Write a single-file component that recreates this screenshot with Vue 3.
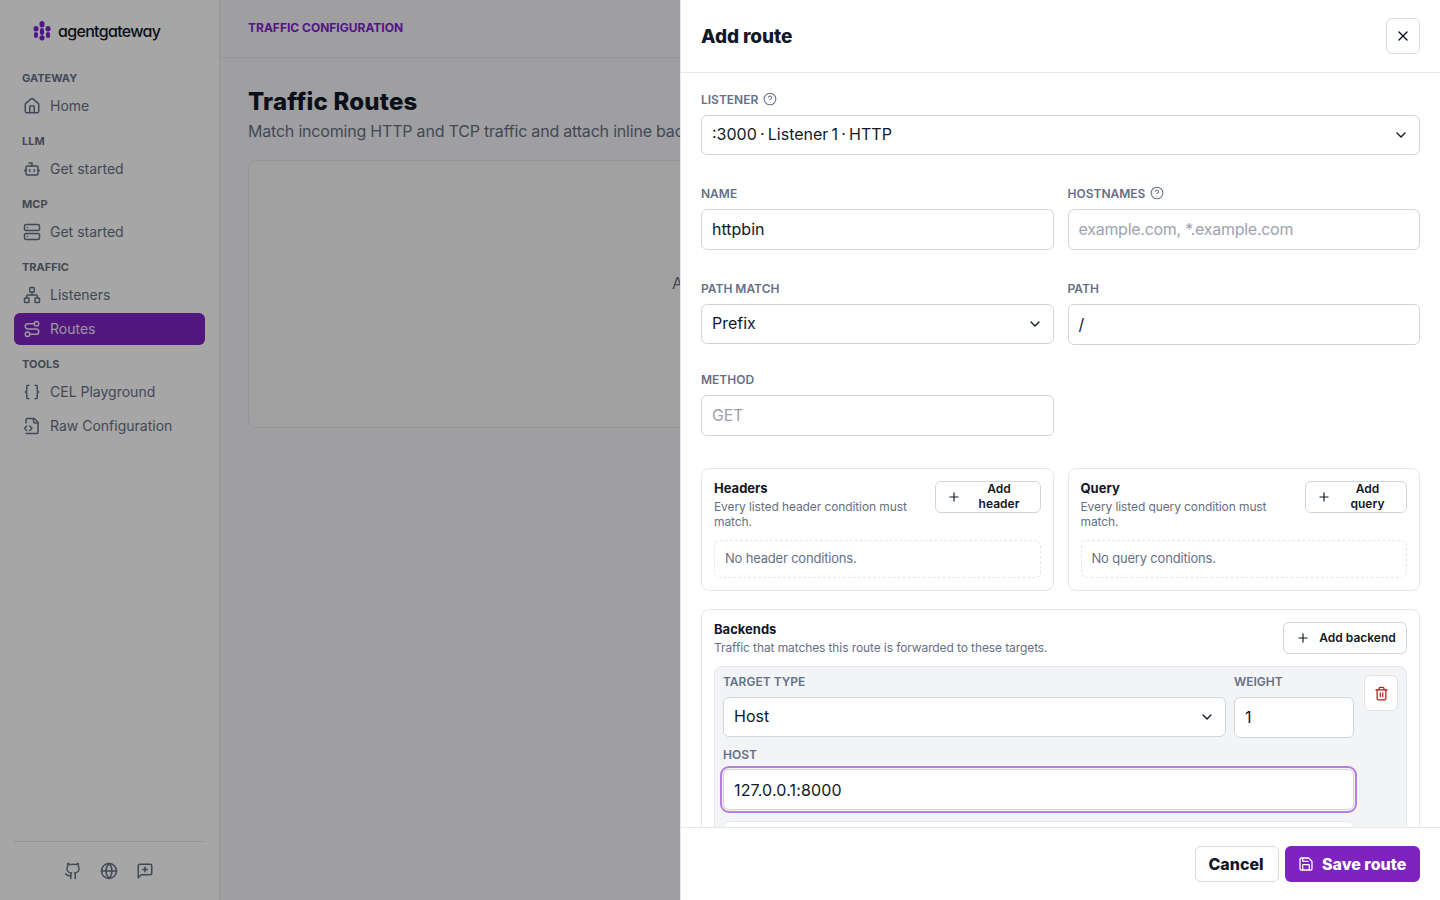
<script setup>
const icons = {
  home: '<path d="M15 21v-8a1 1 0 0 0-1-1h-4a1 1 0 0 0-1 1v8"/><path d="M3 10a2 2 0 0 1 .709-1.528l7-5.999a2 2 0 0 1 2.582 0l7 5.999A2 2 0 0 1 21 10v9a2 2 0 0 1-2 2H5a2 2 0 0 1-2-2z"/>',
  bot: '<path d="M12 8V4H8"/><rect width="16" height="12" x="4" y="8" rx="2"/><path d="M2 14h2"/><path d="M20 14h2"/><path d="M15 13v2"/><path d="M9 13v2"/>',
  server: '<rect width="20" height="8" x="2" y="2" rx="2"/><rect width="20" height="8" x="2" y="14" rx="2"/><path d="M6 6h.01"/><path d="M6 18h.01"/>',
  network: '<rect x="16" y="16" width="6" height="6" rx="1"/><rect x="2" y="16" width="6" height="6" rx="1"/><rect x="9" y="2" width="6" height="6" rx="1"/><path d="M5 16v-3a1 1 0 0 1 1-1h12a1 1 0 0 1 1 1v3"/><path d="M12 12V8"/>',
  route: '<circle cx="6" cy="19" r="3"/><path d="M9 19h8.5a3.5 3.5 0 0 0 0-7h-11a3.5 3.5 0 0 1 0-7H15"/><circle cx="18" cy="5" r="3"/>',
  braces: '<path d="M8 3H7a2 2 0 0 0-2 2v5a2 2 0 0 1-2 2 2 2 0 0 1 2 2v5c0 1.1.9 2 2 2h1"/><path d="M16 21h1a2 2 0 0 0 2-2v-5c0-1.1.9-2 2-2a2 2 0 0 1-2-2V5a2 2 0 0 0-2-2h-1"/>',
  file: '<path d="M4 22h14a2 2 0 0 0 2-2V7l-5-5H6a2 2 0 0 0-2 2v4"/><path d="M14 2v4a2 2 0 0 0 2 2h4"/><path d="m5 12-3 3 3 3"/><path d="m9 18 3-3-3-3"/>',
  github: '<path d="M15 22v-4a4.8 4.8 0 0 0-1-3.5c3 0 6-2 6-5.5.08-1.25-.27-2.48-1-3.5.28-1.15.28-2.35 0-3.5 0 0-1 0-3 1.5-2.64-.5-5.36-.5-8 0C6 2 5 2 5 2c-.3 1.15-.3 2.35 0 3.5A5.403 5.403 0 0 0 4 9c0 3.5 3 5.5 6 5.5-.39.49-.68 1.05-.85 1.65-.17.6-.22 1.23-.15 1.85v4"/><path d="M9 18c-4.51 2-5-2-7-2"/>',
  globe: '<circle cx="12" cy="12" r="10"/><path d="M12 2a14.5 14.5 0 0 0 0 20 14.5 14.5 0 0 0 0-20"/><path d="M2 12h20"/>',
  message: '<path d="M21 15a2 2 0 0 1-2 2H7l-4 4V5a2 2 0 0 1 2-2h14a2 2 0 0 1 2 2z"/><path d="M12 7v6"/><path d="M9 10h6"/>',
  x: '<path d="M18 6 6 18"/><path d="m6 6 12 12"/>',
  help: '<circle cx="12" cy="12" r="10"/><path d="M9.09 9a3 3 0 0 1 5.83 1c0 2-3 3-3 3"/><path d="M12 17h.01"/>',
  plus: '<path d="M5 12h14"/><path d="M12 5v14"/>',
  trash: '<path d="M3 6h18"/><path d="M19 6v14c0 1-1 2-2 2H7c-1 0-2-1-2-2V6"/><path d="M8 6V4c0-1 1-2 2-2h4c1 0 2 1 2 2v2"/><path d="M10 11v6"/><path d="M14 11v6"/>',
  save: '<path d="M15.2 3a2 2 0 0 1 1.4.6l3.8 3.8a2 2 0 0 1 .6 1.4V19a2 2 0 0 1-2 2H5a2 2 0 0 1-2-2V5a2 2 0 0 1 2-2z"/><path d="M17 21v-7a1 1 0 0 0-1-1H8a1 1 0 0 0-1 1v7"/><path d="M7 3v4a1 1 0 0 0 1 1h7"/>',
}

const nav = [
  { title: 'Gateway', items: [{ label: 'Home', icon: 'home' }] },
  { title: 'LLM', items: [{ label: 'Get started', icon: 'bot' }] },
  { title: 'MCP', items: [{ label: 'Get started', icon: 'server' }] },
  { title: 'Traffic', items: [{ label: 'Listeners', icon: 'network' }, { label: 'Routes', icon: 'route', active: true }] },
  { title: 'Tools', items: [{ label: 'CEL Playground', icon: 'braces' }, { label: 'Raw Configuration', icon: 'file' }] },
]
</script>

<template>
  <div class="page">
    <aside class="sidebar">
      <div class="logo">
        <svg class="logo-mark" width="18" height="20" viewBox="0 0 18 20" fill="#7e22ce">
          <rect x="0.5" y="5" width="5" height="5.5" rx="2.5" />
          <rect x="1" y="11" width="4" height="6" rx="2" />
          <rect x="6.5" y="0" width="5" height="6.5" rx="2.5" />
          <rect x="7" y="7" width="4" height="7" rx="2" />
          <circle cx="9" cy="16.8" r="2.6" />
          <rect x="12.5" y="5" width="5" height="5.5" rx="2.5" />
          <rect x="13" y="11" width="4" height="6" rx="2" />
        </svg>
        <span class="logo-text">agentgateway</span>
      </div>
      <nav class="nav">
        <section v-for="group in nav" :key="group.title" class="nav-group">
          <h4>{{ group.title }}</h4>
          <a v-for="item in group.items" :key="item.label" class="nav-item" :class="{ active: item.active }">
            <svg class="icon" width="18" height="18" viewBox="0 0 24 24" v-html="icons[item.icon]"></svg>
            <span>{{ item.label }}</span>
          </a>
        </section>
      </nav>
      <div class="side-foot">
        <svg class="icon" width="18" height="18" viewBox="0 0 24 24" v-html="icons.github"></svg>
        <svg class="icon" width="18" height="18" viewBox="0 0 24 24" v-html="icons.globe"></svg>
        <svg class="icon" width="18" height="18" viewBox="0 0 24 24" v-html="icons.message"></svg>
      </div>
    </aside>

    <main class="main">
      <header class="topbar">Traffic Configuration</header>
      <div class="content">
        <h1>Traffic Routes</h1>
        <p>Match incoming HTTP and TCP traffic and attach inline backends to each route.</p>
        <div class="blank">Add a listener before creating a route.</div>
      </div>
    </main>

    <div class="overlay"></div>

    <div class="drawer">
      <header class="drawer-head">
        <h2>Add route</h2>
        <button class="close"><svg class="icon" width="16" height="16" viewBox="0 0 24 24" v-html="icons.x"></svg></button>
      </header>

      <div class="drawer-body">
        <div class="field first">
          <label>Listener <svg class="icon" width="14" height="14" viewBox="0 0 24 24" v-html="icons.help"></svg></label>
          <div class="select-wrap">
            <select class="tight"><option>:3000 · Listener 1 · HTTP</option></select>
            <svg class="icon chev" width="16" height="16" viewBox="0 0 24 24"><path d="m6 9 6 6 6-6" /></svg>
          </div>
        </div>

        <div class="row r1">
          <div class="field">
            <label>Name</label>
            <input type="text" value="httpbin" />
          </div>
          <div class="field">
            <label>Hostnames <svg class="icon" width="14" height="14" viewBox="0 0 24 24" v-html="icons.help"></svg></label>
            <input type="text" placeholder="example.com, *.example.com" />
          </div>
        </div>

        <div class="row r2">
          <div class="field">
            <label>Path match</label>
            <div class="select-wrap">
              <select><option>Prefix</option></select>
              <svg class="icon chev" width="16" height="16" viewBox="0 0 24 24"><path d="m6 9 6 6 6-6" /></svg>
            </div>
          </div>
          <div class="field">
            <label>Path</label>
            <input type="text" value="/" />
          </div>
        </div>

        <div class="row r3">
          <div class="field">
            <label>Method</label>
            <input type="text" placeholder="GET" />
          </div>
        </div>

        <div class="row cards">
          <section class="card">
            <div class="card-head">
              <div class="card-text">
                <h3>Headers</h3>
                <p>Every listed header condition must match.</p>
              </div>
              <button class="btn-add w-header">
                <svg class="icon" width="14" height="14" viewBox="0 0 24 24" v-html="icons.plus"></svg>
                <span>Add header</span>
              </button>
            </div>
            <div class="empty">No header conditions.</div>
          </section>
          <section class="card">
            <div class="card-head">
              <div class="card-text">
                <h3>Query</h3>
                <p>Every listed query condition must match.</p>
              </div>
              <button class="btn-add w-query">
                <svg class="icon" width="14" height="14" viewBox="0 0 24 24" v-html="icons.plus"></svg>
                <span>Add query</span>
              </button>
            </div>
            <div class="empty">No query conditions.</div>
          </section>
        </div>

        <section class="card backends">
          <div class="card-head">
            <div class="card-text">
              <h3>Backends</h3>
              <p>Traffic that matches this route is forwarded to these targets.</p>
            </div>
            <button class="btn-add w-backend">
              <svg class="icon" width="14" height="14" viewBox="0 0 24 24" v-html="icons.plus"></svg>
              <span>Add backend</span>
            </button>
          </div>
          <div class="backend">
            <div class="backend-fields">
              <div class="target-row">
                <div class="field grow">
                  <label>Target type</label>
                  <div class="select-wrap">
                    <select><option>Host</option></select>
                    <svg class="icon chev" width="16" height="16" viewBox="0 0 24 24"><path d="m6 9 6 6 6-6" /></svg>
                  </div>
                </div>
                <div class="field weight">
                  <label>Weight</label>
                  <input type="text" value="1" />
                </div>
              </div>
              <div class="field host">
                <label>Host</label>
                <input class="focused" type="text" value="127.0.0.1:8000" />
              </div>
              <div class="next-box"></div>
            </div>
            <button class="trash"><svg class="icon" width="15" height="15" viewBox="0 0 24 24" v-html="icons.trash"></svg></button>
          </div>
        </section>
      </div>

      <footer class="drawer-foot">
        <button class="btn-cancel">Cancel</button>
        <button class="btn-save">
          <svg class="icon" width="16" height="16" viewBox="0 0 24 24" v-html="icons.save"></svg>
          Save route
        </button>
      </footer>
    </div>
  </div>
</template>

<style>
html, body { margin: 0; height: 100%; overflow: hidden; }
</style>

<style scoped>
* { box-sizing: border-box; }
.page {
  display: flex;
  height: 900px;
  font-family: Inter, "Liberation Sans", sans-serif;
  color: #111827;
  background: #f4f5f7;
}
.icon {
  fill: none;
  stroke: currentColor;
  stroke-width: 2;
  stroke-linecap: round;
  stroke-linejoin: round;
  flex-shrink: 0;
}

/* sidebar */
.sidebar {
  width: 220px;
  flex-shrink: 0;
  background: #fff;
  border-right: 1px solid #e5e7eb;
  padding: 0 14px;
  display: flex;
  flex-direction: column;
}
.logo {
  display: flex;
  align-items: center;
  gap: 7px;
  height: 62px;
  padding-left: 19px;
}
.logo-text {
  font-size: 16px;
  font-weight: 500;
  font-feature-settings: "cv11";
  letter-spacing: -0.68px;
  color: #111827;
}
.nav { flex: 1; padding-top: 8px; }
.nav-group { margin-bottom: 11px; }
.nav-group h4 {
  margin: 0 0 4px;
  padding-left: 8px;
  font-size: 11px;
  line-height: 16px;
  font-weight: 700;
  text-transform: uppercase;
  color: #667085;
}
.nav-item {
  display: flex;
  align-items: center;
  gap: 9px;
  height: 32px;
  padding-left: 9px;
  margin-bottom: 2px;
  border-radius: 6px;
  font-size: 14px;
  color: #667085;
}
.nav-item span { margin-bottom: 2px; }
.nav-item:last-child { margin-bottom: 0; }
.nav-item.active { background: #7e22c4; color: #f0e6f8; }
.side-foot {
  border-top: 1px solid #e2e4e8;
  height: 59px;
  padding-right: 1px;
  display: flex;
  justify-content: center;
  align-items: center;
  gap: 18px;
  color: #667085;
}

/* main page behind the drawer */
.main { flex: 1; min-width: 0; }
.topbar {
  height: 58px;
  border-bottom: 1px solid #e5e7eb;
  padding-left: 28px;
  display: flex;
  align-items: center;
  padding-bottom: 3px;
  font-size: 12px;
  font-weight: 700;
  text-transform: uppercase;
  color: #7e22ce;
}
.content { padding: 28px 28px 0; }
.content h1 { margin: 0; font-size: 24px; line-height: 32px; font-weight: 800; letter-spacing: 0.2px; }
.content p { margin: 1px 0 0; font-size: 16px; line-height: 24px; letter-spacing: -0.2px; color: #667085; white-space: nowrap; }
.blank {
  margin-top: 17px;
  height: 268px;
  border: 1px solid #e5e7eb;
  border-radius: 8px;
  background: #f7f8f9;
  display: flex;
  align-items: center;
  justify-content: center;
  padding: 0 30px 22px 0;
  font-size: 16px;
  color: #667085;
}

.overlay {
  position: fixed;
  inset: 0;
  background: rgba(0, 0, 0, 0.35);
}

/* drawer */
.drawer {
  position: fixed;
  top: 0;
  right: 0;
  bottom: 0;
  width: 760px;
  background: #fff;
  border-left: 1px solid #e5e7eb;
  display: flex;
  flex-direction: column;
}
.drawer-head {
  height: 73px;
  flex-shrink: 0;
  padding: 0 20px;
  border-bottom: 1px solid #e5e7eb;
  display: flex;
  align-items: center;
  justify-content: space-between;
}
.drawer-head h2 { margin: 1px 0 0; font-size: 19px; font-weight: 800; letter-spacing: -0.1px; }
.close {
  width: 34px;
  height: 36px;
  padding: 0;
  background: #fff;
  border: 1px solid #d8dbe0;
  border-radius: 6px;
  color: #111827;
  display: flex;
  align-items: center;
  justify-content: center;
}
.drawer-body {
  flex: 1;
  min-height: 0;
  overflow: hidden;
  padding: 19px 20px 0;
}
.field label {
  display: flex;
  align-items: center;
  gap: 5px;
  height: 16px;
  padding-bottom: 2px;
  margin-bottom: 7px;
  font-size: 12px;
  font-weight: 600;
  text-transform: uppercase;
  color: #667085;
}
.field label .icon { color: #667085; stroke-width: 1.75; }
.field.first { margin-bottom: 31px; }
.row { display: grid; grid-template-columns: 1fr 1fr; column-gap: 14px; }
.row.r1 { margin-bottom: 31px; }
.row.r2 { margin-bottom: 27px; }
.row.r3 { margin-bottom: 32px; }
.row.cards { margin-bottom: 18px; }
input, select {
  display: block;
  width: 100%;
  height: 41px;
  padding: 0 10px 2px;
  background: #fff;
  border: 1px solid #d1d5db;
  border-radius: 6px;
  font: inherit;
  font-size: 16px;
  color: #111827;
  outline: none;
}
input::placeholder { color: #9ca3af; opacity: 1; letter-spacing: -0.27px; }
select { height: 40px; appearance: none; }
select.tight { word-spacing: -1.3px; }
.select-wrap { position: relative; }
.chev { position: absolute; right: 11px; top: 12px; color: #111827; pointer-events: none; }

.card {
  border: 1px solid #e5e7eb;
  border-radius: 8px;
  padding: 12px;
}
.card-head { display: flex; justify-content: space-between; gap: 12px; margin-bottom: 11px; }
.card-text { flex: 1; min-width: 0; }
.card-text h3 { margin: -1px 0 3px; font-size: 13px; line-height: 16px; font-weight: 700; }
.card-text p { margin: 0; font-size: 12px; line-height: 15px; letter-spacing: -0.1px; color: #667085; }
.btn-add {
  flex-shrink: 0;
  height: 32px;
  padding: 0 8px 0 11px;
  background: #fff;
  border: 1px solid #d1d5db;
  border-radius: 6px;
  display: flex;
  align-items: center;
  gap: 6px;
  font: inherit;
  font-size: 12px;
  line-height: 15px;
  font-weight: 600;
  color: #111827;
}
.btn-add span { flex: 1; text-align: center; margin-bottom: 2px; }
.w-header { width: 106px; }
.w-query { width: 102px; }
.w-query span { padding: 0 8px; }
.w-backend { width: 124px; padding: 0 10px 0 12px; gap: 9px; }
.w-backend span { white-space: nowrap; }
.empty {
  height: 38px;
  border: 1px dashed #e5e7eb;
  border-radius: 6px;
  padding: 0 0 2px 10px;
  display: flex;
  align-items: center;
  font-size: 13px;
  letter-spacing: -0.19px;
  color: #667085;
}
.backends .card-head { margin-bottom: 11px; }
.backend {
  display: flex;
  gap: 10px;
  padding: 7px 8px 8px 8px;
  background: #f3f4f6;
  border: 1px solid #e5e7eb;
  border-radius: 8px;
}
.backend-fields { flex: 1; min-width: 0; }
.target-row { display: flex; gap: 8px; }
.grow { flex: 1; min-width: 0; }
.weight { width: 120px; }
.host { margin-top: 8px; }
.host label { padding-bottom: 0; }
.focused { padding-bottom: 0; letter-spacing: 0.15px; outline: 2.5px solid #b57fe0; outline-offset: 1px; }
.next-box {
  margin-top: 11px;
  height: 40px;
  background: #fff;
  border: 1px solid #e5e7eb;
  border-radius: 6px;
}
.trash {
  width: 34px;
  height: 36px;
  padding: 0;
  margin-top: 1px;
  flex-shrink: 0;
  background: #fff;
  border: 1px solid #e0e2e6;
  border-radius: 6px;
  color: #b91c1c;
  display: flex;
  align-items: center;
  justify-content: center;
}

.drawer-foot {
  height: 73px;
  flex-shrink: 0;
  position: relative;
  background: #fff;
  border-top: 1px solid #e5e7eb;
  padding: 18px 20px 0;
  display: flex;
  justify-content: flex-end;
  gap: 6px;
}
.btn-cancel, .btn-save {
  height: 36px;
  border-radius: 6px;
  font: inherit;
  font-size: 16px;
  font-weight: 800;
}
.btn-cancel {
  width: 84px;
  padding: 0 2px 0 0;
  background: #fff;
  border: 1px solid #d8dbe0;
  color: #111827;
}
.btn-save {
  width: 135px;
  padding: 0 0 0 13px;
  background: #7e22c0;
  border: none;
  color: #fff;
  display: flex;
  align-items: center;
  gap: 8px;
}
</style>
